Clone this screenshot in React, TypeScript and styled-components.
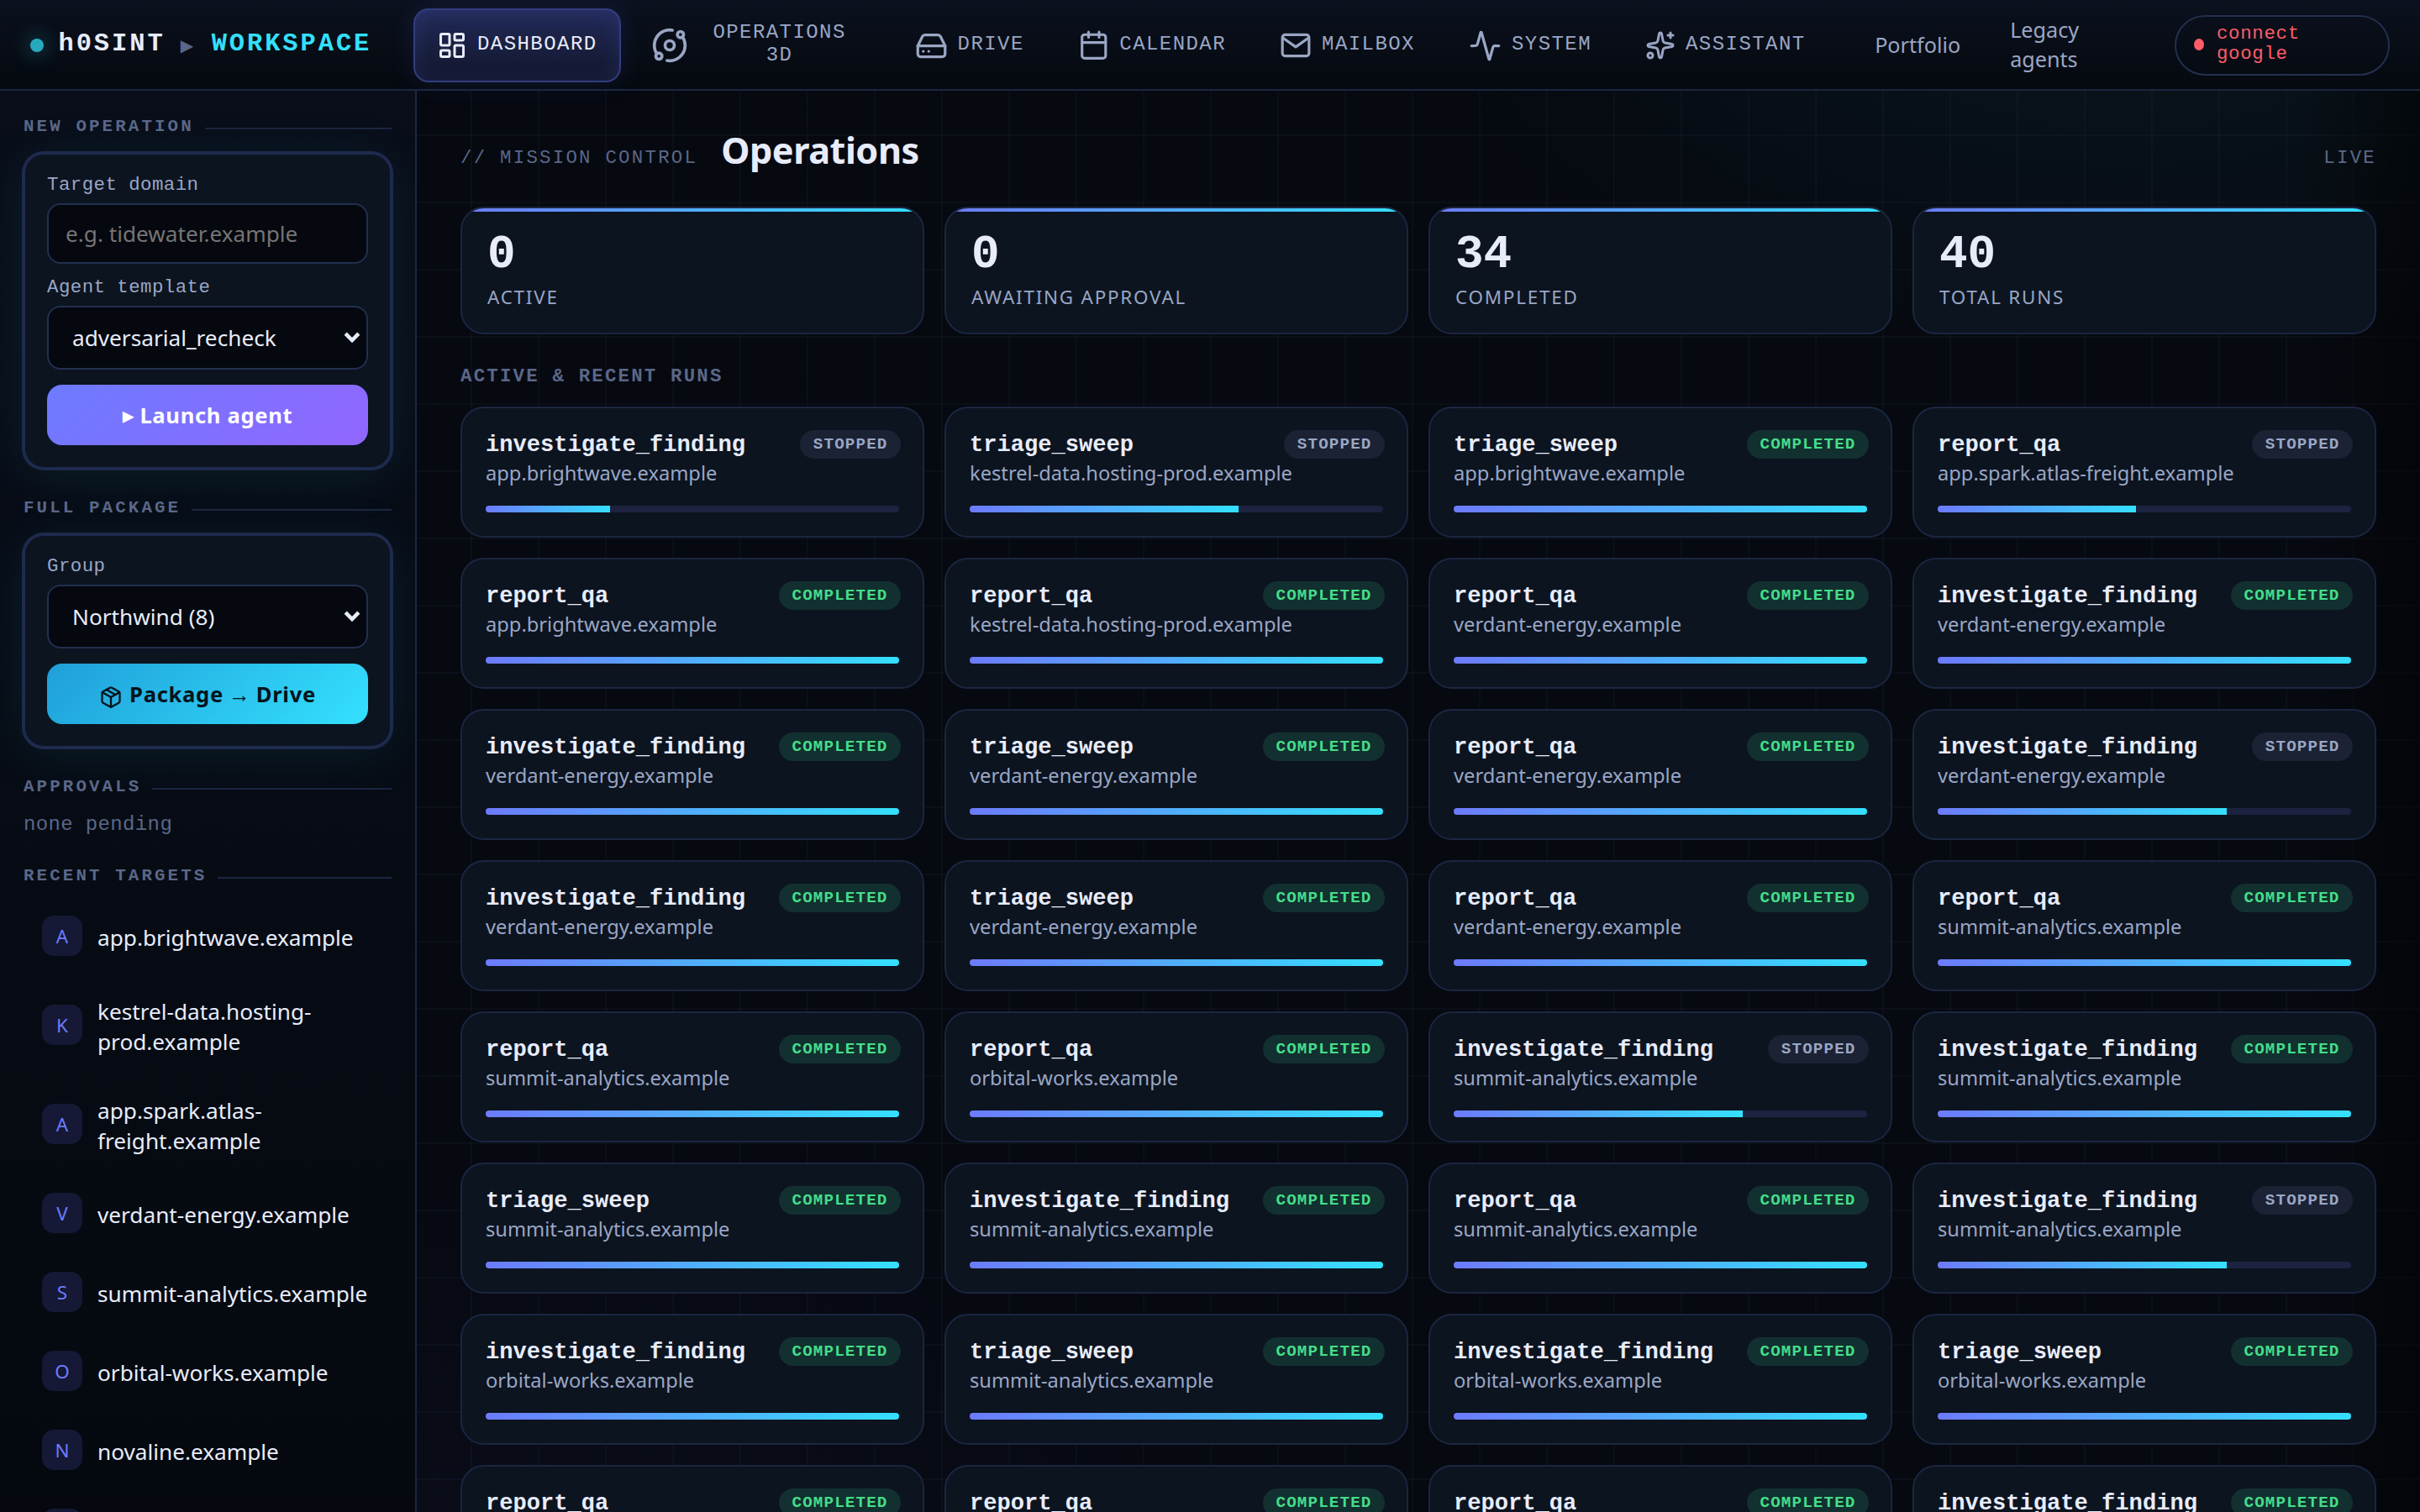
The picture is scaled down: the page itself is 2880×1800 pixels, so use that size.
import React from 'react';
import styled, { createGlobalStyle, css } from 'styled-components';
import { Activity, Calendar, HardDrive, LayoutDashboard, Orbit, Package, Sparkles } from 'lucide-react';

const GlobalStyle = createGlobalStyle`
  :root {
    --bg: #060910;
    --panel: #0c1420;
    --line: #1b2640;
    --line-strong: #22304f;
    --text: #e8ecfa;
    --muted: #9aa6c4;
    --dim: #5a6788;
    --indigo: #6d7bff;
    --violet: #9166ff;
    --cyan: #34e0ff;
    --green: #45dd8a;
    --red: #ff5c68;
    --sans: 'Noto Sans', 'DejaVu Sans', sans-serif;
    --mono: 'Liberation Mono', 'DejaVu Sans Mono', monospace;
  }

  * {
    box-sizing: border-box;
  }

  body {
    margin: 0;
    background: var(--bg);
    color: var(--text);
    font-family: var(--sans);
    overflow: hidden;
  }

  button, input {
    font-family: inherit;
  }
`;

const Shell = styled.div`
  display: grid;
  grid-template-rows: 108px 1fr;
  width: 2880px;
  height: 1800px;
  overflow: hidden;
  background:
    linear-gradient(90deg, transparent 2740px, rgba(0, 0, 0, 0.45) 2880px),
    linear-gradient(rgba(120, 150, 220, 0.04) 2px, transparent 2px) 0 0 / 80px 80px,
    linear-gradient(90deg, rgba(120, 150, 220, 0.04) 2px, transparent 2px) 0 0 / 80px 80px,
    radial-gradient(1200px 600px at 88% 0, rgba(52, 224, 230, 0.06), transparent 70%),
    radial-gradient(1400px 900px at 20% 110%, rgba(109, 100, 255, 0.05), transparent 70%),
    var(--bg);
`;

const TopBar = styled.header`
  display: flex;
  align-items: center;
  padding: 2px 36px 0;
  border-bottom: 2px solid var(--line);
  background: linear-gradient(180deg, #0b111e, #05090f);
`;

const Brand = styled.div`
  display: flex;
  align-items: center;
  width: 456px;
  font-family: var(--mono);
  font-size: 30.4px;
  font-weight: 700;
  letter-spacing: 0.097em;
  white-space: nowrap;
`;

const BrandDot = styled.span`
  width: 16px;
  height: 16px;
  margin-right: 17.5px;
  border-radius: 50%;
  background: #27a9bd;
  box-shadow: 0 0 24px rgba(52, 224, 255, 0.5);
`;

const BrandName = styled.span`
  padding-bottom: 4px;
`;

const BrandArrow = styled.span`
  width: 55px;
  padding-left: 18px;
  color: var(--dim);
  font: 400 20px 'DejaVu Sans', sans-serif;
`;

const BrandAccent = styled(BrandName)`
  color: var(--cyan);
`;

const Nav = styled.nav`
  display: flex;
  flex: none;
  align-items: center;
  gap: 8px;
`;

const NavButton = styled.button<{ $active?: boolean }>`
  display: flex;
  align-items: center;
  gap: 12px;
  height: 88px;
  padding: 0 26px;
  border: 2px solid transparent;
  border-radius: 18px;
  background: none;
  color: var(--muted);
  font-family: var(--mono);
  font-size: 24px;
  letter-spacing: 0.06em;

  ${({ $active }) =>
    $active &&
    css`
      color: var(--text);
      border-color: #333d80;
      background: linear-gradient(180deg, #222a58, #11162b);
      box-shadow: 0 0 32px rgba(109, 123, 255, 0.12), inset 0 0 24px rgba(109, 123, 255, 0.14);
    `}

  svg {
    flex: none;
  }
`;

const NavLabel = styled.span<{ $width?: number }>`
  width: ${({ $width }) => ($width ? `${$width}px` : 'auto')};
  padding-bottom: 4px;
  text-align: center;
`;

const LegacyLinks = styled.div`
  display: flex;
  align-items: center;
  margin-left: 54.5px;
  padding-bottom: 2px;
`;

const LegacyLink = styled.a<{ $width: number }>`
  width: ${({ $width }) => $width}px;
  color: var(--muted);
  font-size: 25.2px;
  line-height: 34.6px;
`;

const ConnectPill = styled.button`
  display: flex;
  align-items: center;
  gap: 15px;
  width: 256px;
  height: 72px;
  margin-left: auto;
  padding: 0 60px 0 21px;
  border: 2px solid var(--line-strong);
  border-radius: 36px;
  background: none;
  color: var(--red);
  font-family: var(--mono);
  font-size: 22.4px;
  letter-spacing: 0.03em;
  line-height: 24px;
  text-align: left;
`;

const PillDot = styled.span`
  flex: none;
  width: 12px;
  height: 14px;
  margin-bottom: 2px;
  border-radius: 50%;
  background: var(--red);
`;

const PillText = styled.span`
  padding-bottom: 4px;
`;

const Body = styled.div`
  display: grid;
  grid-template-columns: 496px 1fr;
  min-height: 0;
`;

const Sidebar = styled.aside`
  padding: 28px;
  overflow: hidden;
  border-right: 2px solid var(--line);
  background: linear-gradient(180deg, #090e1a, #05090f);
`;

const SideTitle = styled.h2`
  display: flex;
  align-items: center;
  gap: 13px;
  height: 30px;
  margin: 0;
  color: var(--dim);
  font-family: var(--mono);
  font-size: 20.8px;
  letter-spacing: 0.15em;
  line-height: 30px;

  &::after {
    content: '';
    flex: 1;
    height: 2px;
    margin-top: 4px;
    background: var(--line);
  }
`;

const SideCard = styled.section`
  display: flex;
  flex-direction: column;
  margin: 16px 0 32px;
  padding: 26px;
  border: 2px solid #1e2a4e;
  border-radius: 24px;
  background: var(--panel);
  box-shadow: 0 0 0 2px #1e2a4e, 0 8px 64px rgba(40, 210, 210, 0.1);
`;

const FieldLabel = styled.label`
  height: 32px;
  color: var(--muted);
  font-family: var(--mono);
  font-size: 22.4px;
  letter-spacing: 0.02em;
  line-height: 20px;
`;

const field = css`
  height: 72px;
  border: 2px solid var(--line-strong);
  border-radius: 16px;
  background: #05080f;
  color: var(--text);
  font-size: 26.2px;
`;

const TextInput = styled.input`
  ${field}
  margin-bottom: 18px;
  padding: 0 20px;
  outline: none;

  &::placeholder {
    color: #757575;
  }
`;

const SelectBox = styled.div`
  ${field}
  display: flex;
  align-items: center;
  justify-content: space-between;
  height: 76px;
  margin-bottom: 18px;
  padding: 0 6px 0 28px;
`;

const ActionButton = styled.button<{ $tone: 'violet' | 'cyan' }>`
  display: flex;
  align-items: center;
  justify-content: center;
  height: 72px;
  border: 0;
  border-radius: 18px;
  font-size: 25.6px;
  font-weight: 700;
  letter-spacing: 0.026em;
  white-space: pre;

  ${({ $tone }) =>
    $tone === 'violet'
      ? css`
          color: #fff;
          background: linear-gradient(135deg, var(--indigo), var(--violet));
        `
      : css`
          color: #04141c;
          background: linear-gradient(135deg, #1f9fd8, var(--cyan));
        `}

  svg {
    margin: 8px 8px 0 0;
  }
`;

const PlayGlyph = styled.span`
  margin-right: 6px;
  font: 400 28px 'DejaVu Sans', sans-serif;
`;

const ArrowGlyph = styled.span`
  display: flex;
  justify-content: center;
  width: 25px;
  margin: 2px 7px 0;
  font: 400 26px 'Liberation Sans', sans-serif;
`;

const Empty = styled.p`
  height: 72px;
  margin: 4px 0 0;
  color: var(--dim);
  font-family: var(--mono);
  font-size: 24px;
  letter-spacing: 0.015em;
  line-height: 51px;
`;

const TargetList = styled.ul`
  display: flex;
  flex-direction: column;
  gap: 6px;
  margin: 12px 0 0;
  padding: 0;
  list-style: none;
`;

const TargetItem = styled.li`
  display: flex;
  align-items: center;
  gap: 18px;
  padding: 20px 22px;
  font-size: 26.2px;
  line-height: 36px;
`;

const TargetBadge = styled.span`
  display: grid;
  flex: none;
  place-items: center;
  width: 48px;
  height: 48px;
  padding-top: 2px;
  border-radius: 14px;
  background: #151935;
  color: var(--indigo);
  font-size: 22.4px;
`;

const TargetName = styled.span`
  width: 328px;
  margin: 0 -20px -2px 0;
  padding-top: 2px;
`;

const Main = styled.main`
  padding: 42px 52px 0;
  overflow: hidden;
`;

const MainHead = styled.div`
  display: flex;
  align-items: flex-start;
  height: 96px;
`;

const Kicker = styled.span`
  color: var(--dim);
  font-family: var(--mono);
  font-size: 22.4px;
  letter-spacing: 0.1em;
  line-height: 76px;
`;

const PageTitle = styled.h1`
  flex: 1;
  margin: 0 0 0 28px;
  font-size: 43.2px;
  font-weight: 700;
  letter-spacing: -0.01em;
  line-height: 58px;
`;

const StatGrid = styled.div`
  display: grid;
  grid-template-columns: repeat(4, 1fr);
  gap: 24px;
`;

const StatCard = styled.div`
  height: 152px;
  padding: 22px 30px;
  overflow: hidden;
  border: 2px solid var(--line);
  border-radius: 28px;
  background: linear-gradient(90deg, var(--indigo), var(--cyan)) top / 100% 4px no-repeat, var(--panel);
`;

const StatValue = styled.div`
  font-family: var(--mono);
  font-size: 56px;
  font-weight: 700;
  line-height: 66px;
`;

const StatLabel = styled.div`
  color: var(--muted);
  font-size: 22.4px;
  letter-spacing: 0.08em;
  line-height: 36px;
`;

const RunsTitle = styled.h2`
  height: 86px;
  margin: 0;
  padding-top: 38px;
  color: var(--dim);
  font-family: var(--mono);
  font-size: 22.4px;
  letter-spacing: 0.098em;
  line-height: 24px;
`;

const RunGrid = styled(StatGrid)`
  grid-auto-rows: 156px;
`;

const RunCard = styled.article`
  padding: 24px 28px;
  border: 2px solid var(--line);
  border-radius: 28px;
  background: var(--panel);
`;

const RunHead = styled.div`
  display: flex;
  align-items: center;
  justify-content: space-between;
  height: 38px;
  margin-right: -2px;
`;

const RunName = styled.span`
  font-family: var(--mono);
  font-size: 27.1px;
  font-weight: 700;
`;

const StatusBadge = styled.span<{ $done: boolean }>`
  height: 34px;
  padding: 6px 15.5px 0;
  border-radius: 17px;
  font-family: var(--mono);
  font-size: 19.2px;
  font-weight: 700;
  letter-spacing: 0.06em;
  line-height: 22px;
  color: ${({ $done }) => ($done ? 'var(--green)' : 'var(--muted)')};
  background: ${({ $done }) => ($done ? '#12302f' : '#1a2234')};
`;

const RunTarget = styled.div`
  height: 54px;
  color: var(--muted);
  font-size: 23.68px;
  line-height: 30px;
`;

const Track = styled.div`
  height: 8px;
  overflow: hidden;
  border-radius: 4px;
  background: #1b2340;
`;

const Fill = styled.div`
  height: 100%;
  background: linear-gradient(90deg, var(--indigo), var(--cyan));
`;

const Envelope: React.FC<{ size: number }> = ({ size }) => (
  <svg
    width={size}
    height={size}
    viewBox="0 0 24 24"
    fill="none"
    stroke="currentColor"
    strokeWidth="2"
    strokeLinecap="round"
    strokeLinejoin="round"
  >
    <rect x="2" y="4" width="20" height="16" rx="2" />
    <path d="m2.5 6.5 9.5 6.7 9.5-6.7" />
  </svg>
);

const Chevron: React.FC = () => (
  <svg width="22" height="16" viewBox="0 0 22 16" fill="none" stroke="currentColor" strokeWidth="4.5">
    <path d="M3.2 3.2 L11 11 L18.8 3.2" />
  </svg>
);

type NavEntry = {
  label: string;
  icon: React.ComponentType<{ size: number }>;
  size: number;
  width?: number;
};

const navEntries: NavEntry[] = [
  { label: 'DASHBOARD', icon: LayoutDashboard, size: 36 },
  { label: 'OPERATIONS 3D', icon: Orbit, size: 44, width: 194 },
  { label: 'DRIVE', icon: HardDrive, size: 39 },
  { label: 'CALENDAR', icon: Calendar, size: 37.5 },
  { label: 'MAILBOX', icon: Envelope, size: 38 },
  { label: 'SYSTEM', icon: Activity, size: 39 },
  { label: 'ASSISTANT', icon: Sparkles, size: 36 },
];

const stats = [
  { value: 0, label: 'ACTIVE' },
  { value: 0, label: 'AWAITING APPROVAL' },
  { value: 34, label: 'COMPLETED' },
  { value: 40, label: 'TOTAL RUNS' },
];

const BRIGHTWAVE = 'app.brightwave.example';
const KESTREL = 'kestrel-data.hosting-prod.example';
const ATLAS = 'app.spark.atlas-freight.example';
const VERDANT = 'verdant-energy.example';
const SUMMIT = 'summit-analytics.example';
const ORBITAL = 'orbital-works.example';
const NOVALINE = 'novaline.example';

const recentTargets = [BRIGHTWAVE, KESTREL, ATLAS, VERDANT, SUMMIT, ORBITAL, NOVALINE, 'harborlight.example'];

// [template, target, progress]; anything below 100 was stopped
const runs: [string, string, number][] = [
  ['investigate_finding', BRIGHTWAVE, 30],
  ['triage_sweep', KESTREL, 65],
  ['triage_sweep', BRIGHTWAVE, 100],
  ['report_qa', ATLAS, 48],
  ['report_qa', BRIGHTWAVE, 100],
  ['report_qa', KESTREL, 100],
  ['report_qa', VERDANT, 100],
  ['investigate_finding', VERDANT, 100],
  ['investigate_finding', VERDANT, 100],
  ['triage_sweep', VERDANT, 100],
  ['report_qa', VERDANT, 100],
  ['investigate_finding', VERDANT, 70],
  ['investigate_finding', VERDANT, 100],
  ['triage_sweep', VERDANT, 100],
  ['report_qa', VERDANT, 100],
  ['report_qa', SUMMIT, 100],
  ['report_qa', SUMMIT, 100],
  ['report_qa', ORBITAL, 100],
  ['investigate_finding', SUMMIT, 70],
  ['investigate_finding', SUMMIT, 100],
  ['triage_sweep', SUMMIT, 100],
  ['investigate_finding', SUMMIT, 100],
  ['report_qa', SUMMIT, 100],
  ['investigate_finding', SUMMIT, 70],
  ['investigate_finding', ORBITAL, 100],
  ['triage_sweep', SUMMIT, 100],
  ['investigate_finding', ORBITAL, 100],
  ['triage_sweep', ORBITAL, 100],
  ['report_qa', ORBITAL, 100],
  ['report_qa', ORBITAL, 100],
  ['report_qa', ORBITAL, 100],
  ['investigate_finding', ORBITAL, 100],
];

const App: React.FC = () => {
  return (
    <>
      <GlobalStyle />
      <Shell>
        <TopBar>
          <Brand>
            <BrandDot />
            <BrandName>h0SINT</BrandName>
            <BrandArrow>▶</BrandArrow>
            <BrandAccent>WORKSPACE</BrandAccent>
          </Brand>
          <Nav>
            {navEntries.map(({ label, icon: Icon, size, width }, index) => (
              <NavButton key={label} $active={index === 0}>
                <Icon size={size} />
                <NavLabel $width={width}>{label}</NavLabel>
              </NavButton>
            ))}
          </Nav>
          <LegacyLinks>
            <LegacyLink $width={161}>Portfolio</LegacyLink>
            <LegacyLink $width={110}>Legacy agents</LegacyLink>
          </LegacyLinks>
          <ConnectPill>
            <PillDot />
            <PillText>connect google</PillText>
          </ConnectPill>
        </TopBar>

        <Body>
          <Sidebar>
            <SideTitle>NEW OPERATION</SideTitle>
            <SideCard>
              <FieldLabel>Target domain</FieldLabel>
              <TextInput placeholder="e.g. tidewater.example" />
              <FieldLabel>Agent template</FieldLabel>
              <SelectBox>
                adversarial_recheck
                <Chevron />
              </SelectBox>
              <ActionButton $tone="violet">
                <PlayGlyph>▸</PlayGlyph>Launch agent
              </ActionButton>
            </SideCard>

            <SideTitle>FULL PACKAGE</SideTitle>
            <SideCard>
              <FieldLabel>Group</FieldLabel>
              <SelectBox>
                Northwind (8)
                <Chevron />
              </SelectBox>
              <ActionButton $tone="cyan">
                <Package size={28} />
                Package<ArrowGlyph>→</ArrowGlyph>Drive
              </ActionButton>
            </SideCard>

            <SideTitle>APPROVALS</SideTitle>
            <Empty>none pending</Empty>

            <SideTitle>RECENT TARGETS</SideTitle>
            <TargetList>
              {recentTargets.map(target => (
                <TargetItem key={target}>
                  <TargetBadge>{target[0].toUpperCase()}</TargetBadge>
                  <TargetName>{target}</TargetName>
                </TargetItem>
              ))}
            </TargetList>
          </Sidebar>

          <Main>
            <MainHead>
              <Kicker>// MISSION CONTROL</Kicker>
              <PageTitle>Operations</PageTitle>
              <Kicker>LIVE</Kicker>
            </MainHead>

            <StatGrid>
              {stats.map(stat => (
                <StatCard key={stat.label}>
                  <StatValue>{stat.value}</StatValue>
                  <StatLabel>{stat.label}</StatLabel>
                </StatCard>
              ))}
            </StatGrid>

            <RunsTitle>ACTIVE &amp; RECENT RUNS</RunsTitle>
            <RunGrid>
              {runs.map(([name, target, progress], index) => (
                <RunCard key={index}>
                  <RunHead>
                    <RunName>{name}</RunName>
                    <StatusBadge $done={progress === 100}>
                      {progress === 100 ? 'COMPLETED' : 'STOPPED'}
                    </StatusBadge>
                  </RunHead>
                  <RunTarget>{target}</RunTarget>
                  <Track>
                    <Fill style={{ width: `${progress}%` }} />
                  </Track>
                </RunCard>
              ))}
            </RunGrid>
          </Main>
        </Body>
      </Shell>
    </>
  );
};

export default App;
